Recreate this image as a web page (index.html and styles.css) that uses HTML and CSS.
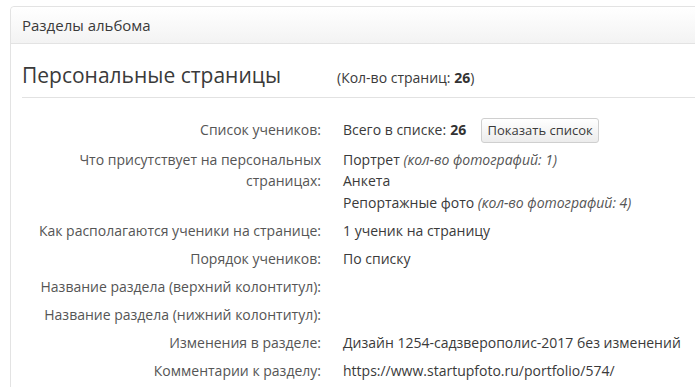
FILE: index.html
```html
<!DOCTYPE html>
<html lang="ru">
<head>
<meta charset="utf-8">
<title>Разделы альбома</title>
<link rel="stylesheet" href="styles.css">
</head>
<body>
<div class="panel">
  <div class="panel-heading">Разделы альбома</div>
  <div class="panel-body">
    <div class="title-row">
      <h2 class="title">Персональные страницы</h2>
      <span class="count">(Кол-во страниц: <b>26</b>)</span>
    </div>
    <div class="info">
      <div class="label">Список учеников:</div>
      <div class="value value-btn">Всего в списке: <b>26</b><button class="btn">Показать список</button></div>

      <div class="label">Что присутствует на персональных страницах:</div>
      <div class="value">Портрет <i>(кол-во фотографий: 1)</i><br>Анкета<br>Репортажные фото <i>(кол-во фотографий: 4)</i></div>

      <div class="label">Как располагаются ученики на странице:</div>
      <div class="value">1 ученик на страницу</div>

      <div class="label">Порядок учеников:</div>
      <div class="value">По списку</div>

      <div class="label">Название раздела (верхний колонтитул):</div>
      <div class="value"></div>

      <div class="label">Название раздела (нижний колонтитул):</div>
      <div class="value"></div>

      <div class="label">Изменения в разделе:</div>
      <div class="value">Дизайн 1254-садзверополис-2017 без изменений</div>

      <div class="label">Комментарии к разделу:</div>
      <div class="value">https://www.startupfoto.ru/portfolio/574/</div>
    </div>
  </div>
</div>
</body>
</html>
```

FILE: styles.css
```css
html, body {
  margin: 0;
  padding: 0;
  background: #fff;
  overflow: hidden;
}
body {
  font-family: "Open Sans", "Liberation Sans", sans-serif;
  color: #3a3a3a;
  font-size: 14px;
  padding: 6px 0 0 10px;
  height: 387px;
  box-sizing: border-box;
}
.panel {
  border: 1px solid #e3e3e3;
  border-radius: 4px 0 0 0;
  width: 720px;
  height: 420px;
  box-sizing: border-box;
}
.panel-heading {
  height: 37px;
  box-sizing: border-box;
  padding: 8px 11px 0;
  font-size: 15px;
  line-height: 20px;
  color: #3a3a3a;
  background: linear-gradient(#ffffff, #f3f3f3);
  border-bottom: 1px solid #e3e3e3;
  border-radius: 4px 0 0 0;
}
.panel-body {
  padding: 0 0 0 11px;
}
.title-row {
  display: flex;
  align-items: baseline;
  height: 54px;
  box-sizing: border-box;
  border-bottom: 1px solid #e2e2e2;
}
.title {
  margin: 0;
  font-weight: 400;
  font-size: 21px;
  line-height: 28px;
  padding-top: 17px;
  width: 315px;
  color: #3a3a3a;
}
.count {
  font-size: 14px;
  color: #3a3a3a;
}
.count b {
  font-weight: 700;
  color: #333;
}
.info {
  display: grid;
  grid-template-columns: 299px 1fr;
  column-gap: 22px;
  row-gap: 6.5px;
  padding-top: 21px;
  line-height: 21.5px;
}
.label {
  text-align: right;
  color: #555;
}
.value {
  color: #3a3a3a;
  min-height: 21px;
}
.value i {
  color: #555;
}
.value-btn {
  display: flex;
  align-items: center;
  height: 24px;
  margin-top: -1px;
}
.value-btn b {
  margin-left: 4px;
  color: #333;
}
.btn {
  margin-left: 15px;
  font-family: inherit;
  font-size: 13px;
  color: #3a3a3a;
  height: 25px;
  width: 118px;
  padding: 0;
  border: 1px solid #cfcfcf;
  border-radius: 3px;
  background: linear-gradient(#ffffff, #ececec);
}
```
